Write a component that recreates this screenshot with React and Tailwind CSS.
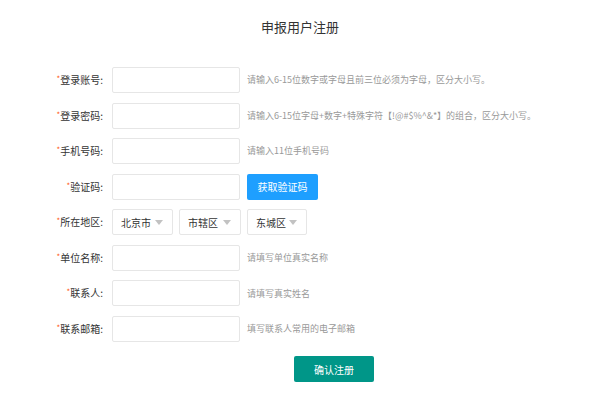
import React from 'react';

const font = { fontFamily: '"Noto Sans CJK SC", "Noto Sans", sans-serif' };

const fields = [
  { label: '登录账号', hint: '请输入6-15位数字或字母且前三位必须为字母，区分大小写。' },
  { label: '登录密码', hint: '请输入6-15位字母+数字+特殊字符【!@#$%^&*】的组合，区分大小写。', type: 'password' },
  { label: '手机号码', hint: '请输入11位手机号码' },
  { label: '验证码', code: true },
  { label: '所在地区', region: true },
  { label: '单位名称', hint: '请填写单位真实名称' },
  { label: '联系人', hint: '请填写真实姓名' },
  { label: '联系邮箱', hint: '填写联系人常用的电子邮箱' },
];

const Select = ({ value, width }) => (
  <div className={`h-[26px] ${width} border border-[#e6e6e6] rounded-[2px] bg-white flex items-center justify-between pl-[8px] pr-[9px]`}>
    <span className="text-[10px] text-[#333]">{value}</span>
    <span className="w-0 h-0 border-x-[4px] border-x-transparent border-t-[5px] border-t-[#c2c2c2]"></span>
  </div>
);

const App = () => {
  return (
    <div className="w-[600px] h-[399px] bg-white overflow-hidden" style={font}>
      {/* Title */}
      <div className="h-[52px] flex items-center justify-center">
        <h1 className="text-[13px] text-[#333] leading-none">申报用户注册</h1>
      </div>

      {/* Form */}
      <div className="pt-[15px] flex flex-col gap-[9.57px]">
        {fields.map((f) => (
          <div key={f.label} className="flex items-center h-[26px]">
            <label className="w-[112px] pr-[9px] text-right text-[10px] text-[#333] leading-none">
              <span className="text-[#ff5722] text-[8px] relative top-[-2px]">*</span>
              {f.label}:
            </label>
            {f.region ? (
              <div className="flex gap-[6px]">
                <Select value="北京市" width="w-[61px]" />
                <Select value="市辖区" width="w-[62px]" />
                <Select value="东城区" width="w-[60px]" />
              </div>
            ) : (
              <input
                type={f.type || 'text'}
                className="w-[128px] h-[26px] border border-[#e6e6e6] rounded-[2px] bg-white px-2 text-[10px] outline-none"
              />
            )}
            {f.code && (
              <button className="ml-[7px] w-[71px] h-[26px] bg-[#1e9fff] text-white text-[10px] rounded-[2px]">
                获取验证码
              </button>
            )}
            {f.hint && (
              <span className="ml-[7px] text-[9px] text-[#999] whitespace-nowrap">{f.hint}</span>
            )}
          </div>
        ))}
      </div>

      {/* Submit */}
      <div className="pt-[13px] pl-[294px]">
        <button className="w-[80px] h-[26px] bg-[#009688] text-white text-[10px] rounded-[2px]">
          确认注册
        </button>
      </div>
    </div>
  );
};

export default App;
